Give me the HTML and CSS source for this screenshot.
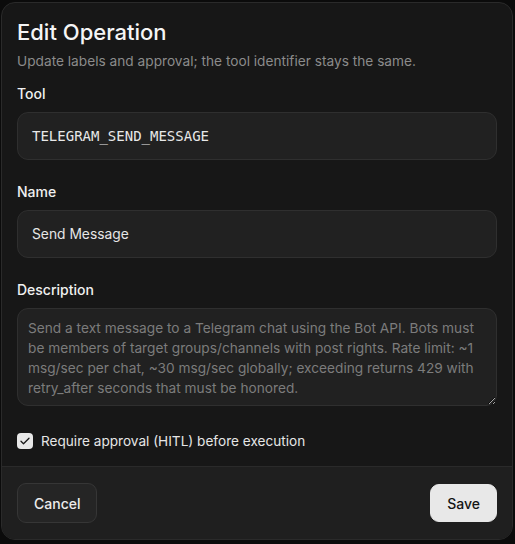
FILE: index.html
```html
<!DOCTYPE html>
<html>

<head>
	<meta charset="utf-8">
	<title>Edit Operation</title>
	<link rel="stylesheet" href="styles.css">
</head>

<body>
	<div class="dialog">
		<div class="dialog-head">
			<h2 class="title">Edit Operation</h2>
			<p class="subtitle">Update labels and approval; the tool identifier stays the same.</p>
		</div>
		<form class="dialog-body">
			<div class="field">
				<label class="label">Tool</label>
				<div class="input mono">TELEGRAM_SEND_MESSAGE</div>
			</div>
			<div class="field">
				<label class="label">Name</label>
				<input type="text" class="input" value="Send Message">
			</div>
			<div class="field">
				<label class="label">Description</label>
				<textarea class="textarea">Send a text message to a Telegram chat using the Bot API. Bots must be members of target groups/channels with post rights. Rate limit: ~1 msg/sec per chat, ~30 msg/sec globally; exceeding returns 429 with retry_after seconds that must be honored.</textarea>
			</div>
			<label class="check-row">
				<span class="checkbox">
					<svg width="12" height="12" viewBox="0 0 24 24" fill="none" stroke="#1a1a1a" stroke-width="2.6"
						stroke-linecap="round" stroke-linejoin="round">
						<path d="M4 12.5l5 5L20 6.5" />
					</svg>
				</span>
				<span>Require approval (HITL) before execution</span>
			</label>
		</form>
		<div class="dialog-foot">
			<button class="btn btn-ghost">Cancel</button>
			<button class="btn btn-primary">Save</button>
		</div>
	</div>
</body>

</html>
```

FILE: styles.css
```css
* {
	box-sizing: border-box;
}

body {
	margin: 0;
	background: #0b0b0b;
	font-family: Inter, "Noto Sans", sans-serif;
	color: #ededed;
}

.dialog {
	margin: 2px 2px 0 1px;
	height: 538px;
	background: #171717;
	border: 1px solid #2a2a2a;
	border-radius: 14px;
	overflow: hidden;
	display: flex;
	flex-direction: column;
}

.dialog-head {
	padding: 16px 15px 0;
}

.title {
	margin: 0;
	font-size: 22px;
	line-height: 26px;
	font-weight: 500;
	color: #f5f5f5;
}

.subtitle {
	margin: 6px 0 0;
	font-size: 13.7px;
	line-height: 20px;
	color: #8b8b8b;
}

.dialog-body {
	padding: 13px 15px 15px;
	display: flex;
	flex-direction: column;
	gap: 22px;
}

.field {
	display: flex;
	flex-direction: column;
}

.label {
	font-size: 14px;
	line-height: 20px;
	font-weight: 500;
	margin-bottom: 8px;
	color: #f0f0f0;
}

.input {
	height: 48px;
	padding: 0 14px;
	background: #212121;
	border: 1px solid #2f2f2f;
	border-radius: 11px;
	font-family: Inter, "Noto Sans", sans-serif;
	font-size: 13.8px;
	line-height: 28px;
	color: #e6e6e6;
	outline: none;
}

.mono {
	display: flex;
	align-items: center;
	font-family: "DejaVu Sans Mono", monospace;
	font-size: 14px;
	color: #e8e8e8;
}

.textarea {
	height: 98px;
	padding: 9px 10px 8px;
	background: #212121;
	border: 1px solid #2f2f2f;
	border-radius: 11px;
	font-family: Inter, "Noto Sans", sans-serif;
	font-size: 13.7px;
	line-height: 20px;
	color: #7c7c7c;
	resize: vertical;
	outline: none;
	overflow: hidden;
	color-scheme: dark;
}

.check-row {
	margin-top: 3px;
	display: flex;
	align-items: center;
	gap: 8px;
	font-size: 13.6px;
	line-height: 20px;
	color: #e6e6e6;
}

.checkbox {
	width: 16px;
	height: 16px;
	border-radius: 4px;
	background: #e8e8e8;
	display: flex;
	align-items: center;
	justify-content: center;
}

.dialog-foot {
	flex: 1;
	border-top: 1px solid #2a2a2a;
	background: #1f1f1f;
	padding: 16px 15px;
	display: flex;
	justify-content: space-between;
	align-items: flex-start;
}

.btn {
	height: 40px;
	padding: 0 16px;
	border-radius: 9px;
	font-family: Inter, "Noto Sans", sans-serif;
	font-size: 14px;
	font-weight: 500;
}

.btn-ghost {
	background: #252525;
	border: 1px solid #363636;
	color: #ececec;
}

.btn-primary {
	height: 38px;
	margin-top: 1px;
	background: #e8e8e8;
	border: 1px solid #e8e8e8;
	color: #141414;
}
```
